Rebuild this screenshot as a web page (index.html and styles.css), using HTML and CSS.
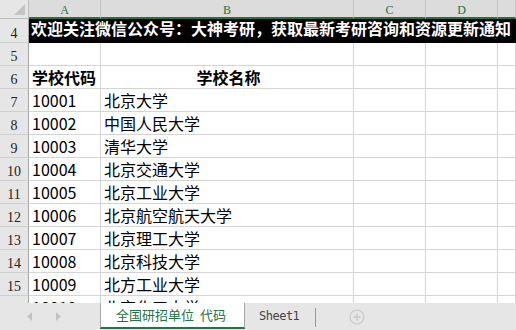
FILE: index.html
```html
<!DOCTYPE html>
<html lang="zh-CN">
<head>
  <meta charset="UTF-8" />
  <title>学校代码</title>
  <link rel="stylesheet" href="styles.css">
</head>
<body>
  <!-- Planilha -->
  <div class="sheet">
    <div class="grid">
      <div class="corner">
        <svg width="11" height="11" viewBox="0 0 11 11"><polygon points="11,0 11,11 0,11" fill="#c4c4c4"/></svg>
      </div>
      <div class="col-head">A</div>
      <div class="col-head">B</div>
      <div class="col-head">C</div>
      <div class="col-head">D</div>
      <div class="col-head"></div>

      <div class="row-head">4</div>
      <div class="banner">欢迎关注微信公众号：大神考研，获取最新考研咨询和资源更新通知</div>

      <div class="row-head">5</div>
      <div class="cell"></div><div class="cell"></div><div class="cell"></div><div class="cell"></div><div class="cell"></div>

      <div class="row-head">6</div>
      <div class="cell bold">学校代码</div><div class="cell bold center">学校名称</div><div class="cell"></div><div class="cell"></div><div class="cell"></div>

      <div class="row-head">7</div>
      <div class="cell">10001</div><div class="cell">北京大学</div><div class="cell"></div><div class="cell"></div><div class="cell"></div>

      <div class="row-head">8</div>
      <div class="cell">10002</div><div class="cell">中国人民大学</div><div class="cell"></div><div class="cell"></div><div class="cell"></div>

      <div class="row-head">9</div>
      <div class="cell">10003</div><div class="cell">清华大学</div><div class="cell"></div><div class="cell"></div><div class="cell"></div>

      <div class="row-head">10</div>
      <div class="cell">10004</div><div class="cell">北京交通大学</div><div class="cell"></div><div class="cell"></div><div class="cell"></div>

      <div class="row-head">11</div>
      <div class="cell">10005</div><div class="cell">北京工业大学</div><div class="cell"></div><div class="cell"></div><div class="cell"></div>

      <div class="row-head">12</div>
      <div class="cell">10006</div><div class="cell">北京航空航天大学</div><div class="cell"></div><div class="cell"></div><div class="cell"></div>

      <div class="row-head">13</div>
      <div class="cell">10007</div><div class="cell">北京理工大学</div><div class="cell"></div><div class="cell"></div><div class="cell"></div>

      <div class="row-head">14</div>
      <div class="cell">10008</div><div class="cell">北京科技大学</div><div class="cell"></div><div class="cell"></div><div class="cell"></div>

      <div class="row-head">15</div>
      <div class="cell">10009</div><div class="cell">北方工业大学</div><div class="cell"></div><div class="cell"></div><div class="cell"></div>

      <div class="row-head">16</div>
      <div class="cell">10010</div><div class="cell">北京化工大学</div><div class="cell"></div><div class="cell"></div><div class="cell"></div>
    </div>
  </div>

  <!-- Abas -->
  <div class="tabs">
    <div class="nav">
      <svg width="5" height="9" viewBox="0 0 5 9"><polygon points="5,0 5,9 0,4.5" fill="#c4c4c4"/></svg>
      <svg width="5" height="9" viewBox="0 0 5 9"><polygon points="0,0 0,9 5,4.5" fill="#c4c4c4"/></svg>
    </div>
    <div class="tab active">全国研招单位 代码</div>
    <div class="tab">Sheet1</div>
    <div class="divider"></div>
    <div class="add">
      <svg width="16" height="16" viewBox="0 0 16 16">
        <circle cx="8" cy="8" r="7" fill="none" stroke="#c8c8c8" stroke-width="1.2"/>
        <path d="M8 4.5v7M4.5 8h7" stroke="#c8c8c8" stroke-width="1.4"/>
      </svg>
    </div>
  </div>
</body>
</html>
```

FILE: styles.css
```css
/* Reset */
* {
  margin: 0;
  padding: 0;
  box-sizing: border-box;
}

body {
  width: 516px;
  height: 330px;
  overflow: hidden;
  background: #fff;
  font-family: "Noto Sans CJK SC", "Noto Sans", sans-serif;
}

.sheet {
  height: 303px;
  overflow: hidden;
}

.grid {
  display: grid;
  grid-template-columns: 29px 72px 253px 72px 72px 1fr;
  grid-template-rows: 19px 24px;
  grid-auto-rows: 23px;
}

/* Cabeçalhos */
.corner {
  background: #e6e6e6;
  border-right: 1px solid #bdbdbd;
  border-bottom: 1px solid #bdbdbd;
  display: flex;
  justify-content: flex-end;
  align-items: flex-end;
  padding: 0 3px 3px 0;
}

.col-head {
  background: #dcdcdc;
  border-right: 1px solid #c4c4c4;
  border-bottom: 2px solid #217346;
  color: #217346;
  font-family: "Liberation Serif", serif;
  font-size: 12px;
  line-height: 13px;
  padding-top: 4px;
  text-align: center;
}

.row-head {
  background: #e6e6e6;
  border-right: 1px solid #a6a6a6;
  border-bottom: 1px solid #cfcfcf;
  color: #222;
  font-family: "Liberation Serif", serif;
  font-size: 14px;
  line-height: 14px;
  display: flex;
  justify-content: center;
  align-items: flex-end;
  padding-bottom: 1px;
}

/* Células */
.banner {
  grid-column: 2 / -1;
  background: #000;
  color: #fff;
  font-size: 16px;
  font-weight: bold;
  line-height: 18px;
  padding-left: 2px;
  white-space: nowrap;
}

.cell {
  border-right: 1px solid #d4d4d4;
  border-bottom: 1px solid #d4d4d4;
  font-size: 16px;
  line-height: 22px;
  padding-left: 3px;
  color: #000;
  white-space: nowrap;
}

.bold {
  font-weight: bold;
}

.center {
  text-align: center;
}

/* Barra de abas */
.tabs {
  height: 27px;
  background: #e6e6e6;
  display: flex;
  align-items: stretch;
}

.nav {
  width: 100px;
  display: flex;
  align-items: center;
  gap: 24px;
  padding-left: 27px;
}

.tab {
  font-size: 13px;
  line-height: 26px;
}

.tab.active {
  width: 145px;
  height: 26px;
  background: #fff;
  color: #217346;
  border-left: 1px solid #a6a6a6;
  border-right: 1px solid #a6a6a6;
  border-bottom: 2px solid #217346;
  padding-left: 15px;
  line-height: 23px;
  word-spacing: 3px;
}

.tab:not(.active) {
  font-family: "DejaVu Sans Mono", monospace;
  font-size: 12px;
  letter-spacing: -0.5px;
  color: #444;
  padding-left: 14px;
  width: 70px;
}

.divider {
  width: 1px;
  background: #9a9a9a;
  margin: 5px 0 3px;
}

.add {
  display: flex;
  align-items: center;
  padding-left: 33px;
}
```
